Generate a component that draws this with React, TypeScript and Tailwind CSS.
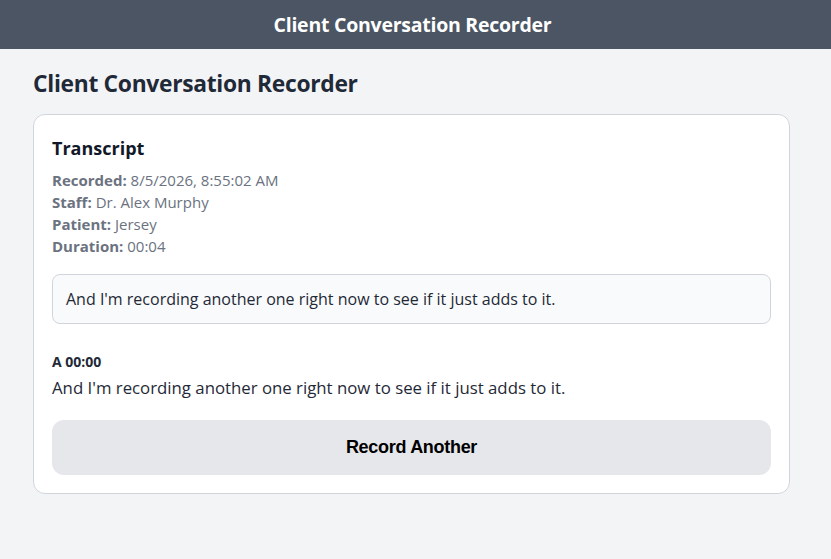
export default function App() {
  const meta = [
    { label: 'Recorded:', value: '8/5/2026, 8:55:02 AM' },
    { label: 'Staff:', value: 'Dr. Alex Murphy' },
    { label: 'Patient:', value: 'Jersey' },
    { label: 'Duration:', value: '00:04' },
  ];
  const text = "And I'm recording another one right now to see if it just adds to it.";

  return (
    <div className="min-h-screen bg-[#f3f4f6] font-['Open_Sans','Noto_Sans',sans-serif]">
      <header className="h-[49px] bg-[#4b5563] flex items-center justify-center">
        <h1 className="text-white text-[19.5px] font-bold tracking-[-0.25px] pr-[6px]">Client Conversation Recorder</h1>
      </header>

      <main className="px-[33px] pt-[19px]">
        <div className="max-w-[757px]">
          <h2 className="text-[22.8px] font-bold text-[#1f2937] tracking-[-0.3px] leading-[32px] mb-[14px]">
            Client Conversation Recorder
          </h2>

          {/* Transcript card */}
          <div className="bg-white border border-[#d1d5db] rounded-[12px] px-[18px] pt-[20px] pb-[18px]">
            <h3 className="text-[18px] font-bold text-[#111827] leading-[26px] mb-[8px]">Transcript</h3>
            <div className="text-[15px] text-[#6b7280] leading-[22px]">
              {meta.map(m => (
                <div key={m.label}>
                  <span className="font-bold">{m.label}</span> {m.value}
                </div>
              ))}
            </div>

            <div className="mt-[17px] bg-[#f9fafb] border border-[#d1d5db] rounded-[8px] px-[13px] py-[12px] text-[16px] text-[#1f2937] leading-[24px]">
              {text}
            </div>

            <div className="mt-[27px]">
              <div className="text-[14px] font-bold text-[#1f2937] leading-[22px]">A 00:00</div>
              <div className="text-[16.8px] text-[#1f2937] leading-[26px] mt-[2px]">{text}</div>
            </div>

            <button className="mt-[19px] w-full h-[55px] rounded-[12px] bg-[#e5e7eb] text-[18px] font-bold text-black font-['Liberation_Sans',Arial,sans-serif] tracking-[-0.3px]">
              Record Another
            </button>
          </div>
        </div>
      </main>
    </div>
  );
}
